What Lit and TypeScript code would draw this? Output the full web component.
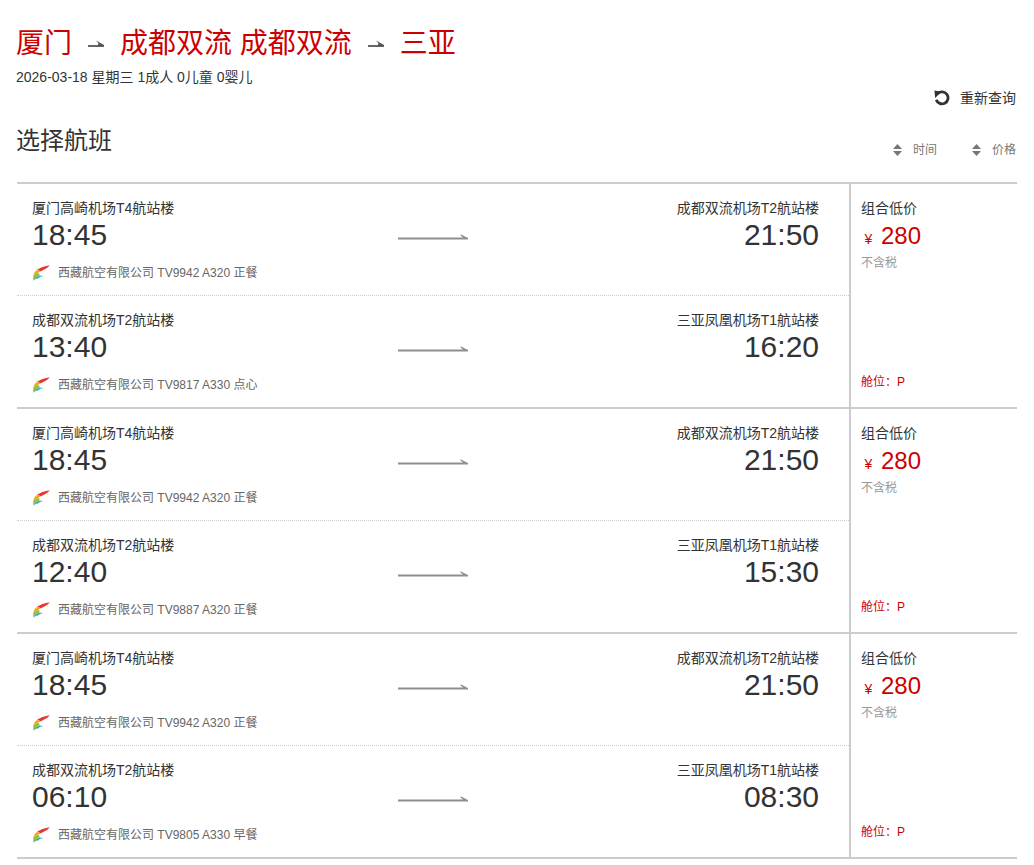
import { LitElement, html, css } from "lit";
import { customElement } from "lit/decorators.js";

const logo = html`<svg class="logo" width="17" height="16" viewBox="0 0 17 16">
  <path d="M16.800 .2C12 1 6.500 2.600 3.800 5 6 5.500 7 6 8 6.200 11 4.800 14.500 3 16.800 .2Z" fill="#e8352e"/>
  <path d="M3.800 5C2 6.500.9 8 .5 10c1.800-.8 3.300-1.500 4.700-2.300L8 6.200C6.500 5.800 5 5.300 3.800 5Z" fill="#f0a81e"/>
  <path d="M.5 10C.1 12 .1 14 .6 15.800 1.500 13.500 3.200 11.800 5.200 10.900L7 10 5.200 7.700C3.600 8.700 2 9.300.5 10Z" fill="#8fc33c"/>
  <path d="M.6 15.800C1.500 13.800 3 12 5 11.200 6.500 10.600 8.500 10.600 10 11.200 7.500 11.300 6 12 5 13.800 4 12.800 2 14 .6 15.800Z" fill="#2f9fc9"/>
</svg>`;

const arrow = html`<svg class="arrow" width="70" height="6" viewBox="0 0 70 6">
  <path d="M0 3.500h65L62 1l1-.5 7 3.500v1.500H0Z" fill="#8f8f8f"/>
</svg>`;

const smallArrow = html`<svg class="small-arrow" width="16" height="8" viewBox="0 0 16 8">
  <path d="M0 5h16v2H0Z" fill="#666"/><path d="M8 .5l8 4.500v1H9.500l1-2.500Z" fill="#555"/>
</svg>`;

const sort = html`<svg class="sort" width="9" height="12" viewBox="0 0 9 12">
  <path d="M4.500 0 9 5H0ZM0 7h9l-4.500 5Z" fill="#777"/>
</svg>`;

const reload = html`<svg class="reload" width="16" height="16" viewBox="0 0 16 16">
  <path d="M3.800 3.600A6 6 0 1 1 2.300 9.700" fill="none" stroke="#333" stroke-width="2.800"/>
  <path d="M.4 .6 7.400 1.800 1.200 8Z" fill="#333"/>
</svg>`;

type Leg = { from: string; to: string; dep: string; arr: string; no: string; plane: string; meal: string };

const first: Leg = { from: "厦门高崎机场T4航站楼", to: "成都双流机场T2航站楼", dep: "18:45", arr: "21:50", no: "TV9942", plane: "A320", meal: "正餐" };
const t2 = "成都双流机场T2航站楼";
const t1 = "三亚凤凰机场T1航站楼";
const options: Leg[] = [
  { from: t2, to: t1, dep: "13:40", arr: "16:20", no: "TV9817", plane: "A330", meal: "点心" },
  { from: t2, to: t1, dep: "12:40", arr: "15:30", no: "TV9887", plane: "A320", meal: "正餐" },
  { from: t2, to: t1, dep: "06:10", arr: "08:30", no: "TV9805", plane: "A330", meal: "早餐" },
];

@customElement("app-root")
export class AppRoot extends LitElement {
  static styles = css`
    :host {
      display: block;
      width: 1034px;
      min-height: 865px;
      box-sizing: border-box;
      padding: 0 17px 0 16px;
      background: #fff;
      font-family: "Liberation Sans", "Noto Sans CJK SC", sans-serif;
      color: #333;
    }
    .title {
      display: flex;
      align-items: center;
      height: 32px;
      margin-top: 28px;
      font-size: 28px;
      line-height: 32px;
      color: #c00;
      white-space: nowrap;
    }
    .small-arrow { margin: 0 16px; flex: none; }
    .date { font-size: 14px; line-height: 20px; margin-top: 7px; }
    .reset {
      display: flex;
      justify-content: flex-end;
      align-items: center;
      gap: 10px;
      font-size: 14px;
      line-height: 20px;
      margin-top: 1px;
      height: 20px;
      padding-right: 1px;
    }
    .head {
      display: flex;
      justify-content: space-between;
      align-items: flex-start;
      height: 58px;
      margin-top: 16px;
    }
    h2 { margin: 0; font-size: 24px; line-height: 34px; font-weight: 400; }
    .sorts {
      display: flex;
      gap: 35px;
      font-size: 12px;
      line-height: 16px;
      color: #777;
      margin-top: 18px;
      padding-right: 1px;
    }
    .sorts span { display: flex; align-items: center; gap: 11px; }
    .card {
      display: flex;
      border-top: 2px solid #ccc;
      height: 223px;
      margin-left: 1px;
    }
    .card:last-child { border-bottom: 2px solid #ccc; }
    .legs { width: 834px; flex: none; box-sizing: border-box; border-right: 2px solid #ccc; }
    .leg {
      height: 111px;
      box-sizing: border-box;
      padding: 15px 30px 0 15px;
    }
    .leg + .leg { border-top: 1px dotted #ccc; height: 112px; }
    .cols { display: grid; grid-template-columns: 1fr 70px 1fr; }
    .end { font-size: 14px; line-height: 18px; white-space: nowrap; }
    .end.r { text-align: right; }
    .time { font-size: 30px; line-height: 36px; color: #333; }
    .mid { display: flex; align-items: flex-end; padding-bottom: 13px; margin-left: 7px; margin-right: -7px; }
    .arrow { display: block; flex: none; }
    .carrier {
      display: flex;
      align-items: center;
      gap: 8px;
      font-size: 12px;
      line-height: 16px;
      color: #666;
      margin-top: 12px;
    }
    .logo { flex: none; margin-left: 1px; }
    .price {
      flex: 1;
      box-sizing: border-box;
      padding: 15px 0 0 10px;
      display: flex;
      flex-direction: column;
    }
    .price .label { font-size: 14px; line-height: 18px; }
    .amount { font-size: 24px; line-height: 36px; padding-top: 1px; color: #c00; display: flex; align-items: baseline; }
    .yen { font-size: 14px; width: 15px; margin-right: 5px; text-align: center; }
    .tax { font-size: 12px; line-height: 16px; color: #999; margin-top: -2px; }
    .cabin { font-size: 12px; line-height: 16px; color: #c00; margin-top: auto; margin-bottom: 17px; }
  `;

  leg(l: Leg) {
    return html`<div class="leg">
      <div class="cols">
        <div class="end">${l.from}<div class="time">${l.dep}</div></div>
        <div class="mid">${arrow}</div>
        <div class="end r">${l.to}<div class="time">${l.arr}</div></div>
      </div>
      <div class="carrier">${logo}<span>西藏航空有限公司 ${l.no} ${l.plane} ${l.meal}</span></div>
    </div>`;
  }

  render() {
    return html`
      <div class="title">厦门${smallArrow}成都双流 成都双流${smallArrow}三亚</div>
      <div class="date">2026-03-18 星期三 1成人 0儿童 0婴儿</div>
      <div class="reset">${reload}<span>重新查询</span></div>
      <div class="head">
        <h2>选择航班</h2>
        <div class="sorts"><span>${sort}时间</span><span>${sort}价格</span></div>
      </div>
      ${options.map(
        (o) => html`<div class="card">
          <div class="legs">${this.leg(first)}${this.leg(o)}</div>
          <div class="price">
            <div class="label">组合低价</div>
            <div class="amount"><span class="yen">¥</span>280</div>
            <div class="tax">不含税</div>
            <div class="cabin">舱位：P</div>
          </div>
        </div>`
      )}
    `;
  }
}
